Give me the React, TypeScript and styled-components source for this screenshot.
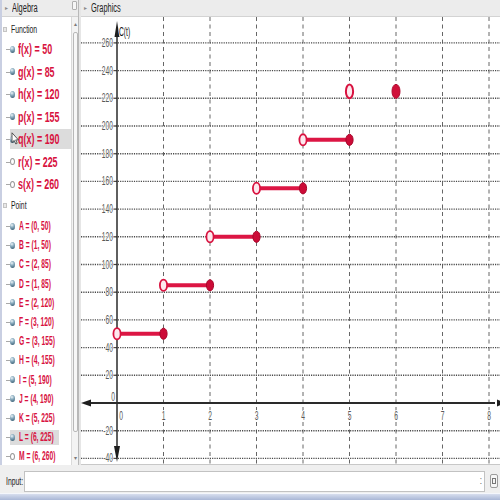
import React from 'react';
import styled, { createGlobalStyle } from 'styled-components';

const GlobalStyle = createGlobalStyle`
  html, body { margin: 0; padding: 0; width: 500px; height: 500px; overflow: hidden; background: #fff; }
  body { font-family: "Liberation Sans", Arial, sans-serif; }
  #root { width: 500px; height: 500px; }
`;

const RED = '#d8123f';

const Window = styled.div`
  width: 500px;
  height: 500px;
  display: flex;
  flex-direction: column;
  background: #fff;
  overflow: hidden;
`;

const Main = styled.div`
  display: flex;
  height: 465px;
`;

const AlgebraPanel = styled.div`
  width: 76px;
  display: flex;
  flex-direction: column;
  border-left: 2px solid #c9cfe2;
`;

const Divider = styled.div`
  width: 3px;
  background: #e6e6e6;
  border-left: 1px solid #b9b9b9;
  box-sizing: border-box;
`;

const GraphicsPanel = styled.div`
  flex: 1;
  display: flex;
  flex-direction: column;
  min-width: 0;
`;

const TitleBar = styled.div`
  height: 17px;
  box-sizing: border-box;
  background: #ececec;
  border-bottom: 1px solid #d3d3d3;
  display: flex;
  align-items: center;
  padding-left: 3px;
  gap: 4px;
`;

const Caret = styled.span`
  font-size: 6px;
  color: #8a8a8a;
  line-height: 1;
`;

const Squeeze = styled.span<{ $sx: number; $size: number; $weight?: number; $color?: string }>`
  display: inline-block;
  white-space: nowrap;
  transform: scaleX(${p => p.$sx});
  transform-origin: left center;
  font-size: ${p => p.$size}px;
  font-weight: ${p => p.$weight ?? 400};
  color: ${p => p.$color ?? '#222'};
  line-height: 1;
`;

const TitleButton = styled.span`
  margin-left: auto;
  margin-right: 1px;
  width: 5px;
  height: 9px;
  box-sizing: border-box;
  border: 1px solid #b0b0b0;
  border-radius: 1px;
  background: #f6f6f6;
  align-self: flex-start;
  margin-top: 1px;
`;

const AlgebraBody = styled.div`
  flex: 1;
  display: flex;
  min-height: 0;
`;

const List = styled.div`
  flex: 1;
  overflow: hidden;
  padding-top: 3px;
  display: flex;
  flex-direction: column;
`;

const SectionHeader = styled.div<{ $h: number; $after?: number }>`
  height: ${p => p.$h}px;
  margin-bottom: ${p => p.$after ?? 0}px;
  display: flex;
  align-items: center;
  gap: 4px;
  padding-left: 1px;
  flex-shrink: 0;
`;

const Toggle = styled.span`
  width: 4px;
  height: 5px;
  border: 1px solid #c4c4c4;
  background: #e8e8e8;
  box-sizing: border-box;
`;

const Row = styled.div<{ $h: number }>`
  height: ${p => p.$h}px;
  position: relative;
  display: flex;
  align-items: center;
  flex-shrink: 0;
  &::before {
    content: '';
    position: absolute;
    left: 4px;
    width: 4px;
    top: 50%;
    height: 1px;
    background: #a9a9a9;
  }
`;

const Item = styled.div<{ $selected?: boolean; $w?: number; $gap: number; $ih: number }>`
  margin-left: 8px;
  height: ${p => p.$ih}px;
  width: ${p => (p.$w ? `${p.$w}px` : 'auto')};
  display: flex;
  align-items: center;
  gap: ${p => p.$gap}px;
  background: ${p => (p.$selected ? '#dcdcdc' : 'transparent')};
  position: relative;
`;

const Dot = styled.span<{ $visible: boolean }>`
  width: 5px;
  height: 7px;
  border-radius: 50%;
  flex-shrink: 0;
  box-sizing: border-box;
  background: ${p =>
    p.$visible
      ? 'radial-gradient(circle at 38% 30%, #eef5f8 0%, #8fb0c2 35%, #4f7489 75%, #36566a 100%)'
      : '#fff'};
  border: ${p => (p.$visible ? 'none' : '1px solid #9a9a9a')};
`;

const Cursor = styled.svg`
  position: absolute;
  left: 1px;
  top: 3px;
`;

const Scrollbar = styled.div`
  width: 6px;
  background: #f3f3f3;
  border-left: 1px solid #dadada;
  display: flex;
  flex-direction: column;
  align-items: center;
`;

const ScrollArrow = styled.span`
  height: 14px;
  font-size: 6px;
  color: #7a7a7a;
  display: flex;
  align-items: center;
  line-height: 1;
`;

const Thumb = styled.div`
  width: 5px;
  height: 400px;
  margin-top: 1px;
  box-sizing: border-box;
  border: 1px solid #b8b8b8;
  border-radius: 2px;
  background: #f7f7f7;
`;

const Spacer = styled.div`
  flex: 1;
`;

const Canvas = styled.div`
  flex: 1;
  border-bottom: 1px solid #c8c8c8;
  background: #fff;
  overflow: hidden;
`;

const InputBar = styled.div`
  height: 28px;
  background: #efefef;
  display: flex;
  align-items: flex-start;
  padding: 6px 2px 0 6px;
  box-sizing: border-box;
`;

const InputLabel = styled.div`
  width: 18px;
  height: 21px;
  display: flex;
  align-items: center;
`;

const InputField = styled.div`
  flex: 1;
  height: 21px;
  background: #fff;
  border: 1px solid #c2c2c2;
  box-sizing: border-box;
  display: flex;
  align-items: center;
  justify-content: flex-end;
  padding-right: 2px;
`;

const FieldGrip = styled.span`
  font-size: 8px;
  color: #444;
  line-height: 1;
`;

const InputButton = styled.div`
  width: 8px;
  height: 14px;
  margin: 3px 0 0 5px;
  box-sizing: border-box;
  border: 1px solid #9c9c9c;
  border-radius: 2px;
  background: #f6f6f6;
  display: flex;
  align-items: center;
  justify-content: center;
  &::after {
    content: '';
    width: 2px;
    height: 4px;
    border: 1px solid #777;
  }
`;

const BottomStrip = styled.div`
  height: 7px;
  border-top: 1px solid #f4f6fb;
  background: linear-gradient(#d7deee, #a9b7d6);
  box-sizing: border-box;
`;

const functions = [
  { text: 'f(x) = 50', visible: true },
  { text: 'g(x) = 85', visible: true },
  { text: 'h(x) = 120', visible: true },
  { text: 'p(x) = 155', visible: true },
  { text: 'q(x) = 190', visible: true, selected: true, w: 62, cursor: true },
  { text: 'r(x) = 225', visible: false },
  { text: 's(x) = 260', visible: false },
];

const points = [
  { text: 'A = (0, 50)', visible: true },
  { text: 'B = (1, 50)', visible: true },
  { text: 'C = (2, 85)', visible: true },
  { text: 'D = (1, 85)', visible: true },
  { text: 'E = (2, 120)', visible: true },
  { text: 'F = (3, 120)', visible: true },
  { text: 'G = (3, 155)', visible: true },
  { text: 'H = (4, 155)', visible: true },
  { text: 'I = (5, 190)', visible: true },
  { text: 'J = (4, 190)', visible: true },
  { text: 'K = (5, 225)', visible: true },
  { text: 'L = (6, 225)', visible: true, selected: true, w: 49 },
  { text: 'M = (6, 260)', visible: false },
];

const W = 419;
const H = 447;
const OX = 36;
const OY = 386;
const UX = 46.5;
const UY = 1.385;
const px = (t: number) => OX + t * UX;
const py = (v: number) => OY - v * UY;

const Label: React.FC<{ x: number; y: number; anchor: 'start' | 'middle' | 'end'; children: string; color?: string }> = ({
  x,
  y,
  anchor,
  children,
  color = '#595959',
}) => (
  <text
    transform={`translate(${x},${y}) scale(0.56,1)`}
    textAnchor={anchor}
    fontFamily='"Liberation Sans", Arial, sans-serif'
    fontSize={12}
    fill={color}
    stroke="#fff"
    strokeWidth={2}
    paintOrder="stroke"
  >
    {children}
  </text>
);

const Graph: React.FC = () => {
  const vGrid = [1, 2, 3, 4, 5, 6, 7, 8];
  const hGrid: number[] = [];
  for (let v = -40; v <= 260; v += 20) if (v !== 0) hGrid.push(v);
  const segs = [0, 1, 2, 3, 4].map(i => ({ x0: i, x1: i + 1, y: 50 + 35 * i }));
  return (
    <svg width={W} height={H} viewBox={`0 0 ${W} ${H}`} style={{ display: 'block' }}>
      {vGrid.map(k => (
        <line key={`v${k}`} x1={px(k)} x2={px(k)} y1={0} y2={H} stroke="#666" strokeWidth={1} strokeDasharray="4 3.5" />
      ))}
      {hGrid.map(v => (
        <line key={`h${v}`} x1={0} x2={W} y1={py(v)} y2={py(v)} stroke="#4a4a4a" strokeWidth={1.4} strokeDasharray="1.2 1.1" />
      ))}
      {hGrid.map(v => (
        <line key={`t${v}`} x1={OX - 3} x2={OX} y1={py(v)} y2={py(v)} stroke="#444" strokeWidth={1} />
      ))}
      {hGrid.map(v => (
        <Label key={`l${v}`} x={32} y={py(v) + 4} anchor="end">
          {String(v)}
        </Label>
      ))}
      <Label x={34} y={OY - 2} anchor="end">0</Label>
      <Label x={OX + 4} y={OY + 17} anchor="middle">0</Label>
      {vGrid.map(k => (
        <Label key={`x${k}`} x={px(k)} y={OY + 17} anchor="middle">
          {String(k)}
        </Label>
      ))}
      <line x1={8} x2={414} y1={OY} y2={OY} stroke="#2a2a2a" strokeWidth={2} />
      <polygon points={`0,${OY} 10,${OY - 3.5} 10,${OY + 3.5}`} fill="#1e1e1e" />
      <polygon points={`425,${OY} 416,${OY - 3.5} 416,${OY + 3.5}`} fill="#1e1e1e" />
      <line x1={OX} x2={OX} y1={16} y2={432} stroke="#2a2a2a" strokeWidth={1.5} />
      <polygon points={`${OX},4 ${OX - 2.5},20 ${OX + 2.5},20`} fill="#1e1e1e" />
      <polygon points={`${OX},445 ${OX - 3},429 ${OX + 3},429`} fill="#1e1e1e" />
      <Label x={38} y={19} anchor="start" color="#111">C(t)</Label>
      {segs.map(s => (
        <g key={`s${s.x0}`}>
          <line x1={px(s.x0)} x2={px(s.x1)} y1={py(s.y)} y2={py(s.y)} stroke="#dc1644" strokeWidth={4} />
          <ellipse cx={px(s.x0)} cy={py(s.y)} rx={3.6} ry={5.6} fill="#fde8ee" stroke="#d8123f" strokeWidth={1.8} />
          <ellipse cx={px(s.x1)} cy={py(s.y)} rx={3.6} ry={5.6} fill="#cc0b37" stroke="#a8062a" strokeWidth={1} />
        </g>
      ))}
      <ellipse cx={px(5)} cy={py(225)} rx={3.6} ry={6.8} fill="#fde8ee" stroke="#d8123f" strokeWidth={2} />
      <ellipse cx={px(6)} cy={py(225)} rx={4} ry={7} fill="#d0103a" stroke="#b00a30" strokeWidth={1} />
    </svg>
  );
};

export default function App() {
  return (
    <>
      <GlobalStyle />
      <Window>
        <Main>
          <AlgebraPanel>
            <TitleBar>
              <Caret>▸</Caret>
              <Squeeze $sx={0.62} $size={12}>Algebra</Squeeze>
              <TitleButton />
            </TitleBar>
            <AlgebraBody>
              <List>
                <SectionHeader $h={18}>
                  <Toggle />
                  <Squeeze $sx={0.62} $size={11}>Function</Squeeze>
                </SectionHeader>
                {functions.map(f => (
                  <Row key={f.text} $h={22.5}>
                    <Item $selected={f.selected} $w={f.w} $gap={3} $ih={20}>
                      <Dot $visible={f.visible} />
                      <Squeeze $sx={0.64} $size={14} $weight={700} $color={RED}>
                        {f.text}
                      </Squeeze>
                      {f.cursor && (
                        <Cursor width="8" height="13" viewBox="0 0 8 13">
                          <path d="M1 0.8 L1 10.5 L3.2 8.4 L4.8 12 L6.2 11.3 L4.7 7.9 L7.4 7.9 Z" fill="#fff" stroke="#333" strokeWidth="0.8" />
                        </Cursor>
                      )}
                    </Item>
                  </Row>
                ))}
                <SectionHeader $h={19.5} $after={1.5}>
                  <Toggle />
                  <Squeeze $sx={0.62} $size={11}>Point</Squeeze>
                </SectionHeader>
                {points.map(p => (
                  <Row key={p.text} $h={19.2}>
                    <Item $selected={p.selected} $w={p.w} $gap={4} $ih={15}>
                      <Dot $visible={p.visible} />
                      <Squeeze $sx={0.56} $size={12} $weight={700} $color={RED}>
                        {p.text}
                      </Squeeze>
                    </Item>
                  </Row>
                ))}
              </List>
              <Scrollbar>
                <ScrollArrow>▴</ScrollArrow>
                <Thumb />
                <Spacer />
                <ScrollArrow>▾</ScrollArrow>
              </Scrollbar>
            </AlgebraBody>
          </AlgebraPanel>
          <Divider />
          <GraphicsPanel>
            <TitleBar>
              <Caret>▸</Caret>
              <Squeeze $sx={0.62} $size={12}>Graphics</Squeeze>
            </TitleBar>
            <Canvas>
              <Graph />
            </Canvas>
          </GraphicsPanel>
        </Main>
        <InputBar>
          <InputLabel>
            <Squeeze $sx={0.62} $size={11}>Input:</Squeeze>
          </InputLabel>
          <InputField>
            <FieldGrip>⁚</FieldGrip>
          </InputField>
          <InputButton />
        </InputBar>
        <BottomStrip />
      </Window>
    </>
  );
}
